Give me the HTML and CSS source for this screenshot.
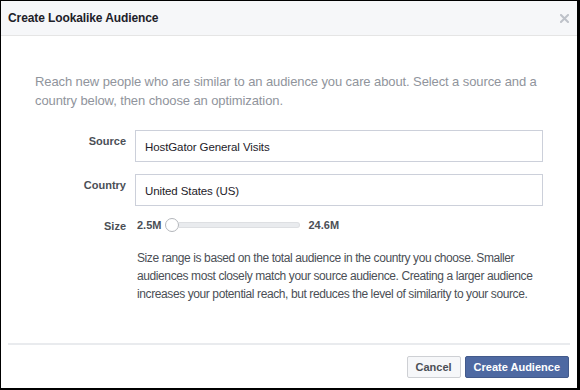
FILE: index.html
```html
<!DOCTYPE html>
<html>
<head>
<meta charset="utf-8">
<link rel="stylesheet" href="styles.css">
</head>
<body>
<div class="dialog">
  <div class="header">
    <span class="title">Create Lookalike Audience</span>
    <svg class="close" width="9" height="9" viewBox="0 0 9 9"><path d="M1 1L8 8M8 1L1 8" stroke="#bec2c9" stroke-width="2" stroke-linecap="square"/></svg>
  </div>
  <div class="body">
    <p class="intro">Reach new people who are similar to an audience you care about. Select a source and a country below, then choose an optimization.</p>
    <div class="form">
      <div class="label">Source</div>
      <div class="field">HostGator General Visits</div>
      <div class="label">Country</div>
      <div class="field">United States (US)</div>
      <div class="label size-label">Size</div>
      <div class="slider-row">
        <span class="val">2.5M</span>
        <span class="slider"><span class="knob"></span><span class="track"></span></span>
        <span class="val">24.6M</span>
      </div>
      <div></div>
      <p class="desc">Size range is based on the total audience in the country you choose. Smaller audiences most closely match your source audience. Creating a larger audience increases your potential reach, but reduces the level of similarity to your source.</p>
    </div>
  </div>
  <div class="footer">
    <button class="btn cancel">Cancel</button>
    <button class="btn primary">Create Audience</button>
  </div>
</div>
</body>
</html>
```

FILE: styles.css
```css
html, body {
  margin: 0;
  padding: 0;
  background: #fff;
}
.dialog {
  width: 580px;
  height: 390px;
  box-sizing: border-box;
  border: 1px solid #000;
  border-right-width: 3px;
  border-bottom-width: 2px;
  display: flex;
  flex-direction: column;
  font-family: "Liberation Sans", Arial, sans-serif;
  background: #fff;
}
.header {
  height: 34px;
  background: #f6f7f9;
  border-bottom: 1px solid #e5e5e5;
  display: flex;
  align-items: center;
  justify-content: space-between;
  padding: 0 8px 0 7px;
}
.title {
  font-size: 12px;
  letter-spacing: -0.1px;
  font-weight: bold;
  color: #1d2129;
}
.close {
  display: block;
}
.body {
  flex: 1;
  padding: 36px 0 0 34px;
}
.intro {
  margin: 0;
  width: 515px;
  font-size: 13px;
  letter-spacing: -0.1px;
  line-height: 19px;
  color: #90949c;
}
.form {
  margin-top: 20px;
  display: grid;
  grid-template-columns: 91px 408px;
  column-gap: 9px;
  row-gap: 12px;
}
.label {
  text-align: right;
  font-size: 11px;
  font-weight: bold;
  color: #4b4f56;
  padding-top: 4px;
  line-height: 15px;
}
.size-label {
  padding-top: 1px;
}
.field {
  height: 32px;
  box-sizing: border-box;
  border: 1px solid #ccd0da;
  padding: 2px 9px 0;
  display: flex;
  align-items: center;
  font-size: 11.5px;
  letter-spacing: -0.1px;
  color: #1d2129;
}
.slider-row {
  display: flex;
  align-items: center;
  padding-left: 2px;
  height: 16px;
  margin-top: -1px;
}
.val {
  font-size: 11px;
  font-weight: bold;
  color: #4b4f56;
}
.slider {
  display: flex;
  align-items: center;
  margin: 0 8px 0 4px;
}
.knob {
  width: 12px;
  height: 12px;
  border: 1px solid #b3b6bb;
  border-radius: 50%;
  background: #fff;
  box-sizing: content-box;
}
.track {
  width: 120px;
  height: 4px;
  background: #e9ebee;
  border: 1px solid #dddfe2;
  border-left: none;
  border-radius: 0 3px 3px 0;
}
.desc {
  margin: 3px 0 0 2px;
  font-size: 12px;
  letter-spacing: -0.4px;
  line-height: 18px;
  color: #4b4f56;
}
.footer {
  margin: 0 7px 0 7px;
  border-top: 2px solid #e9ebee;
  padding: 11px 0 10px;
  display: flex;
  justify-content: flex-end;
  gap: 4px;
}
.btn {
  height: 22px;
  box-sizing: border-box;
  font-family: "Liberation Sans", Arial, sans-serif;
  font-size: 11px;
  font-weight: bold;
  padding: 0 8px;
  border-radius: 2px;
  line-height: 20px;
}
.cancel {
  background: #f6f7f9;
  border: 1px solid #ced0d4;
  color: #4b4f56;
}
.primary {
  background: #4e69a2;
  border: 1px solid #435a8b;
  color: #fff;
  padding: 0 8px;
  margin-right: 1px;
}
```
